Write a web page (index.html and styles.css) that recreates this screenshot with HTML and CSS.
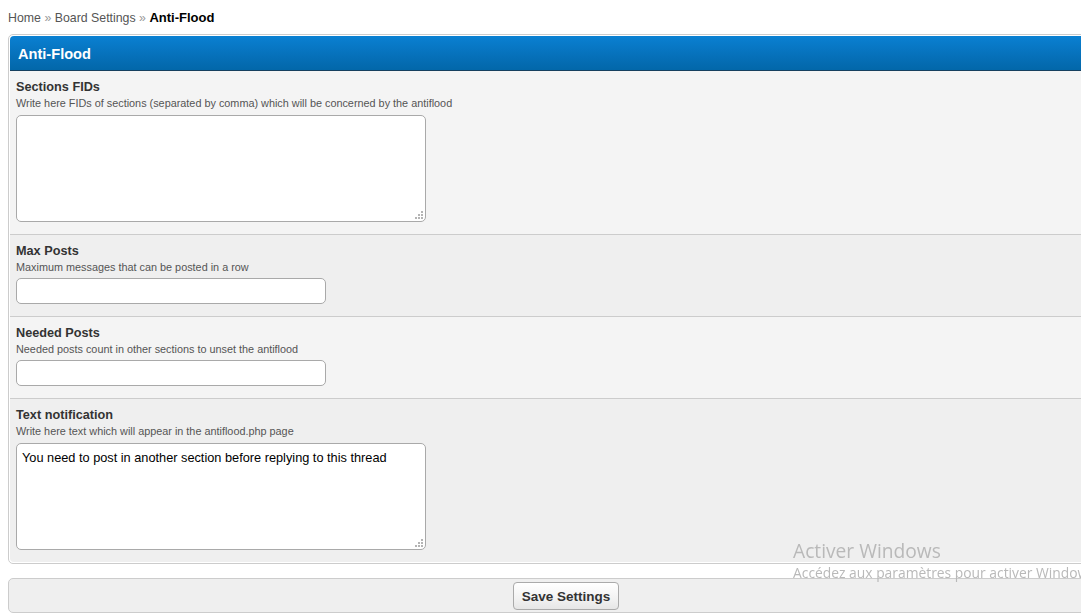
FILE: index.html
```html
<!DOCTYPE html>
<html>
<head>
<meta charset="utf-8">
<link rel="stylesheet" href="styles.css">
</head>
<body>
<div class="breadcrumb"><a href="#">Home</a> <span class="sep">»</span> <a href="#">Board Settings</a> <span class="sep">»</span> <span class="active">Anti-Flood</span></div>
<div class="viewport-clip">
<form class="page">
  <div class="border_wrapper">
    <div class="thead">Anti-Flood</div>
    <div class="row">
      <label class="label">Sections FIDs</label>
      <div class="desc">Write here FIDs of sections (separated by comma) which will be concerned by the antiflood</div>
      <div class="ta-wrap">
        <textarea class="ta"></textarea>
        <svg class="grip" width="8" height="8" viewBox="0 0 8 8"><rect x="6" y="0" width="2" height="2"/><rect x="3" y="3" width="2" height="2"/><rect x="6" y="3" width="2" height="2"/><rect x="0" y="6" width="2" height="2"/><rect x="3" y="6" width="2" height="2"/><rect x="6" y="6" width="2" height="2"/></svg>
      </div>
    </div>
    <div class="row alt">
      <label class="label">Max Posts</label>
      <div class="desc">Maximum messages that can be posted in a row</div>
      <input class="txt" type="text">
    </div>
    <div class="row">
      <label class="label">Needed Posts</label>
      <div class="desc">Needed posts count in other sections to unset the antiflood</div>
      <input class="txt" type="text">
    </div>
    <div class="row alt last">
      <label class="label">Text notification</label>
      <div class="desc">Write here text which will appear in the antiflood.php page</div>
      <div class="ta-wrap">
        <textarea class="ta">You need to post in another section before replying to this thread</textarea>
        <svg class="grip" width="8" height="8" viewBox="0 0 8 8"><rect x="6" y="0" width="2" height="2"/><rect x="3" y="3" width="2" height="2"/><rect x="6" y="3" width="2" height="2"/><rect x="0" y="6" width="2" height="2"/><rect x="3" y="6" width="2" height="2"/><rect x="6" y="6" width="2" height="2"/></svg>
      </div>
    </div>
  </div>
  <div class="buttons">
    <button type="button" class="submit">Save Settings</button>
  </div>
</form>
</div>
<div class="activate">
  <div class="act-title">Activer Windows</div>
  <div class="act-sub">Accédez aux paramètres pour activer Windows.</div>
</div>
</body>
</html>
```

FILE: styles.css
```css
html, body {
  overflow: hidden;
}
body {
  margin: 8px 0 8px 8px;
  background: #fff;
  font-family: "Liberation Sans", Arial, sans-serif;
  color: #333;
}
.viewport-clip {
  overflow: hidden;
  margin-top: 8px;
}
.breadcrumb {
  font-size: 12.35px;
  line-height: 19px;
  height: 18px;
  color: #555;
  white-space: nowrap;
}
.breadcrumb a {
  color: #555;
  text-decoration: none;
}
.breadcrumb .sep {
  color: #999;
}
.breadcrumb .active {
  font-weight: bold;
  color: #000;
  font-size: 13px;
}
.page {
  width: 1116px;
  margin: 0;
}
.border_wrapper {
  border: 1px solid #ccc;
  border-radius: 5px;
  padding: 1px;
  background: #fff;
}
.thead {
  height: 34px;
  line-height: 36px;
  border-bottom: 1px solid #163f5e;
  background: linear-gradient(to bottom, #0a80d2 0%, #0670b9 60%, #0267a9 100%);
  color: #fff;
  font-weight: bold;
  font-size: 14.6px;
  padding-left: 8px;
  border-radius: 4px 4px 0 0;
}
.row {
  padding: 9px 6px 12px 6px;
  background: #f4f4f4;
  border-bottom: 1px solid #ccc;
}
.row.alt {
  background: #efefef;
}
.row.last {
  border-bottom: 0;
  border-radius: 0 0 4px 4px;
}
.label {
  display: block;
  font-weight: bold;
  font-size: 12.7px;
  line-height: 15px;
  color: #333;
}
.desc {
  font-size: 10.85px;
  line-height: 16px;
  color: #555;
  white-space: nowrap;
}
.ta-wrap {
  position: relative;
  width: 410px;
  height: 107px;
  margin-top: 4px;
}
.ta {
  display: block;
  box-sizing: border-box;
  width: 410px;
  height: 107px;
  margin: 0;
  border: 1px solid #a9a9a9;
  border-radius: 5px;
  background: #fff;
  resize: none;
  padding: 6px 5px;
  font-family: "Liberation Sans", Arial, sans-serif;
  font-size: 12.75px;
  line-height: 15px;
  color: #000;
  outline: none;
}
.grip {
  position: absolute;
  right: 3px;
  bottom: 3px;
  fill: #b4b4b4;
}
.txt {
  display: block;
  box-sizing: border-box;
  width: 310px;
  height: 26px;
  margin: 3px 0 0 0;
  border: 1px solid #a9a9a9;
  border-radius: 5px;
  background: #fff;
  padding: 3px 5px;
  font-family: "Liberation Sans", Arial, sans-serif;
  font-size: 12px;
  outline: none;
}
.buttons {
  margin-top: 14px;
  box-sizing: border-box;
  height: 35px;
  border: 1px solid #ccc;
  border-radius: 5px;
  background: #efefef;
  display: flex;
  justify-content: center;
  align-items: flex-start;
  padding-top: 3px;
}
.submit {
  height: 28px;
  width: 106px;
  padding: 0;
  border: 1px solid #aaa;
  border-radius: 4px;
  background: linear-gradient(to bottom, #ffffff 0%, #f2f2f2 60%, #e6e6e6 100%);
  font-family: "Liberation Sans", Arial, sans-serif;
  font-weight: bold;
  font-size: 13.5px;
  color: #333;
}
.activate {
  position: fixed;
  left: 793px;
  top: 538px;
  white-space: nowrap;
  font-family: "Open Sans", "Noto Sans", sans-serif;
  color: #b9b9b9;
  pointer-events: none;
}
.act-title {
  font-size: 19.2px;
  line-height: 25px;
}
.act-sub {
  font-size: 13.85px;
  line-height: 20px;
}
```
